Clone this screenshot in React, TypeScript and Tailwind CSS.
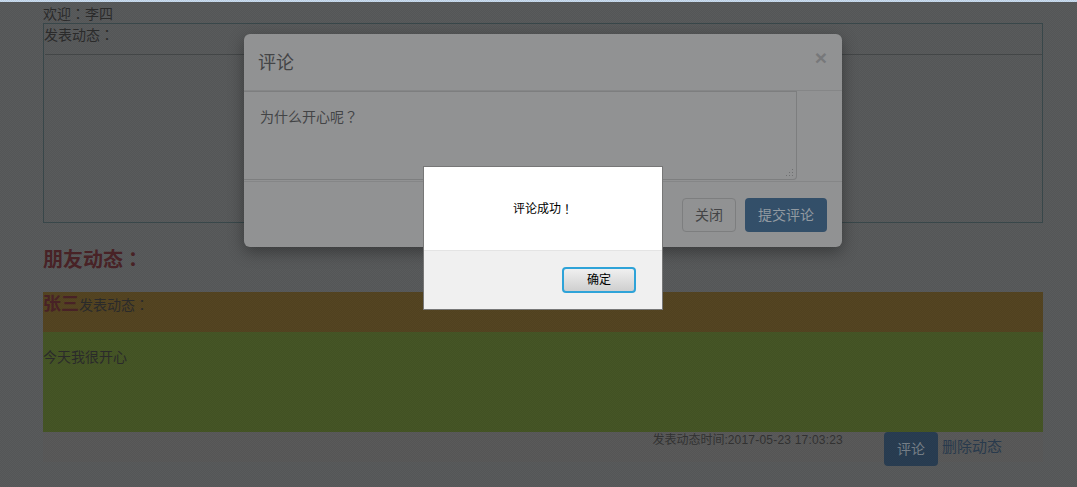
const base = "font-['Liberation_Sans','Noto_Sans_CJK_SC',sans-serif]";

const dots =
  "bg-[repeating-conic-gradient(rgba(0,0,0,0.06)_0_25%,transparent_0_50%)] bg-[length:2px_2px]";

function P({ c }: { c: string }) {
  return <span className="font-['Noto_Sans_CJK_TC',sans-serif]">{c}</span>;
}

export default function App() {
  return (
    <div className={`relative h-[487px] w-[1077px] overflow-hidden bg-[#595b5c] ${base} text-sm leading-5 text-[#2c2c2c]`}>
      <div className="h-[2px] bg-[#c9dcf0]" />
      <div className="ml-[43px] w-[1000px]">
        <div className="h-[21px] pt-[1px] leading-5">欢迎<P c="：" />李四</div>
        <div className="h-[200px] border border-[#3a494c]">
          <div className="h-[30px] leading-5">发表动态<P c="：" /></div>
          <div className="ml-[1px] h-[1px] bg-[#454849]" />
        </div>
        <h3 className="mt-[22px] h-[28px] text-xl leading-7 font-bold text-[#4a2327]">朋友动态<P c="：" /></h3>
        <div className="mt-[19px] h-[40px] bg-[#554522]">
          <span className="text-lg leading-6 font-bold text-[#4a2327]">张三</span>
          <span>发表动态<P c="：" /></span>
        </div>
        <div className="flex h-[100px] items-start bg-[#465626] pt-[15px]">今天我很开心</div>
        <div className="flex h-[30px] items-start justify-end bg-[#5a5a5a]">
          <span className="mr-[41px] text-xs leading-4 text-[#333]">发表动态时间:<span className="tracking-[0.2px]">2017-05-23 17:03:23</span></span>
          <span className="flex h-[34px] w-[54px] items-center justify-center rounded bg-[#293e53] text-[#78818a]">评论</span>
          <span className="mt-[5px] mr-[41px] ml-[4px] text-[15px] text-[#2a3c4f]">删除动态</span>
        </div>
      </div>

      <div className={`absolute inset-0 ${dots}`} />

      <div className="absolute top-[34px] left-[244px] flex h-[213px] w-[598px] flex-col rounded-md bg-[#919293] shadow-[0_5px_15px_rgba(0,0,0,0.35)]">
        <div className="flex h-[57px] items-center justify-between border-b border-[#858687] pr-[15px] pl-[14px]">
          <span className="pt-[2px] text-lg text-[#434446]">评论</span>
          <span className="pb-2 text-[21px] font-bold text-[#77787a]">×</span>
        </div>
        <div className="h-[91px] border-b border-[#858687]">
          <div className="relative h-[89px] w-[553px] rounded-br border border-l-0 border-[#7d7e7f] pt-[14px] pl-[16px] text-[#434446]">
            为什么开心呢<P c="？" />
            <svg className="absolute right-[1px] bottom-[1px]" width="10" height="10" viewBox="0 0 10 10" fill="#6f7071">
              <rect x="7" y="1" width="1" height="1" />
              <rect x="4" y="4" width="1" height="1" />
              <rect x="7" y="4" width="1" height="1" />
              <rect x="1" y="7" width="1" height="1" />
              <rect x="4" y="7" width="1" height="1" />
              <rect x="7" y="7" width="1" height="1" />
            </svg>
          </div>
        </div>
        <div className="flex flex-1 items-center justify-end gap-[9px] pt-[1px] pr-[15px]">
          <span className="flex h-[34px] w-[54px] items-center justify-center rounded border border-[#7d7e7f] text-[#434446]">关闭</span>
          <span className="flex h-[34px] w-[82px] items-center justify-center rounded bg-[#334f69] text-[#929aa1]">提交评论</span>
        </div>
      </div>

      <div className="absolute top-[166px] left-[423px] flex h-[144px] w-[240px] flex-col border border-[#777] bg-white text-black">
        <div className="flex h-[84px] items-center justify-center border-b border-[#e4e4e4] text-xs">评论成功<P c="！" /></div>
        <div className="flex flex-1 items-center justify-end bg-[#f0f0f0] pr-[26px]">
          <span className="flex h-[26px] w-[74px] items-center justify-center rounded-sm border-2 border-[#2ea3d8] bg-gradient-to-b from-[#f0f0f0] to-[#cfcfcf] text-xs">确定</span>
        </div>
      </div>
    </div>
  );
}
